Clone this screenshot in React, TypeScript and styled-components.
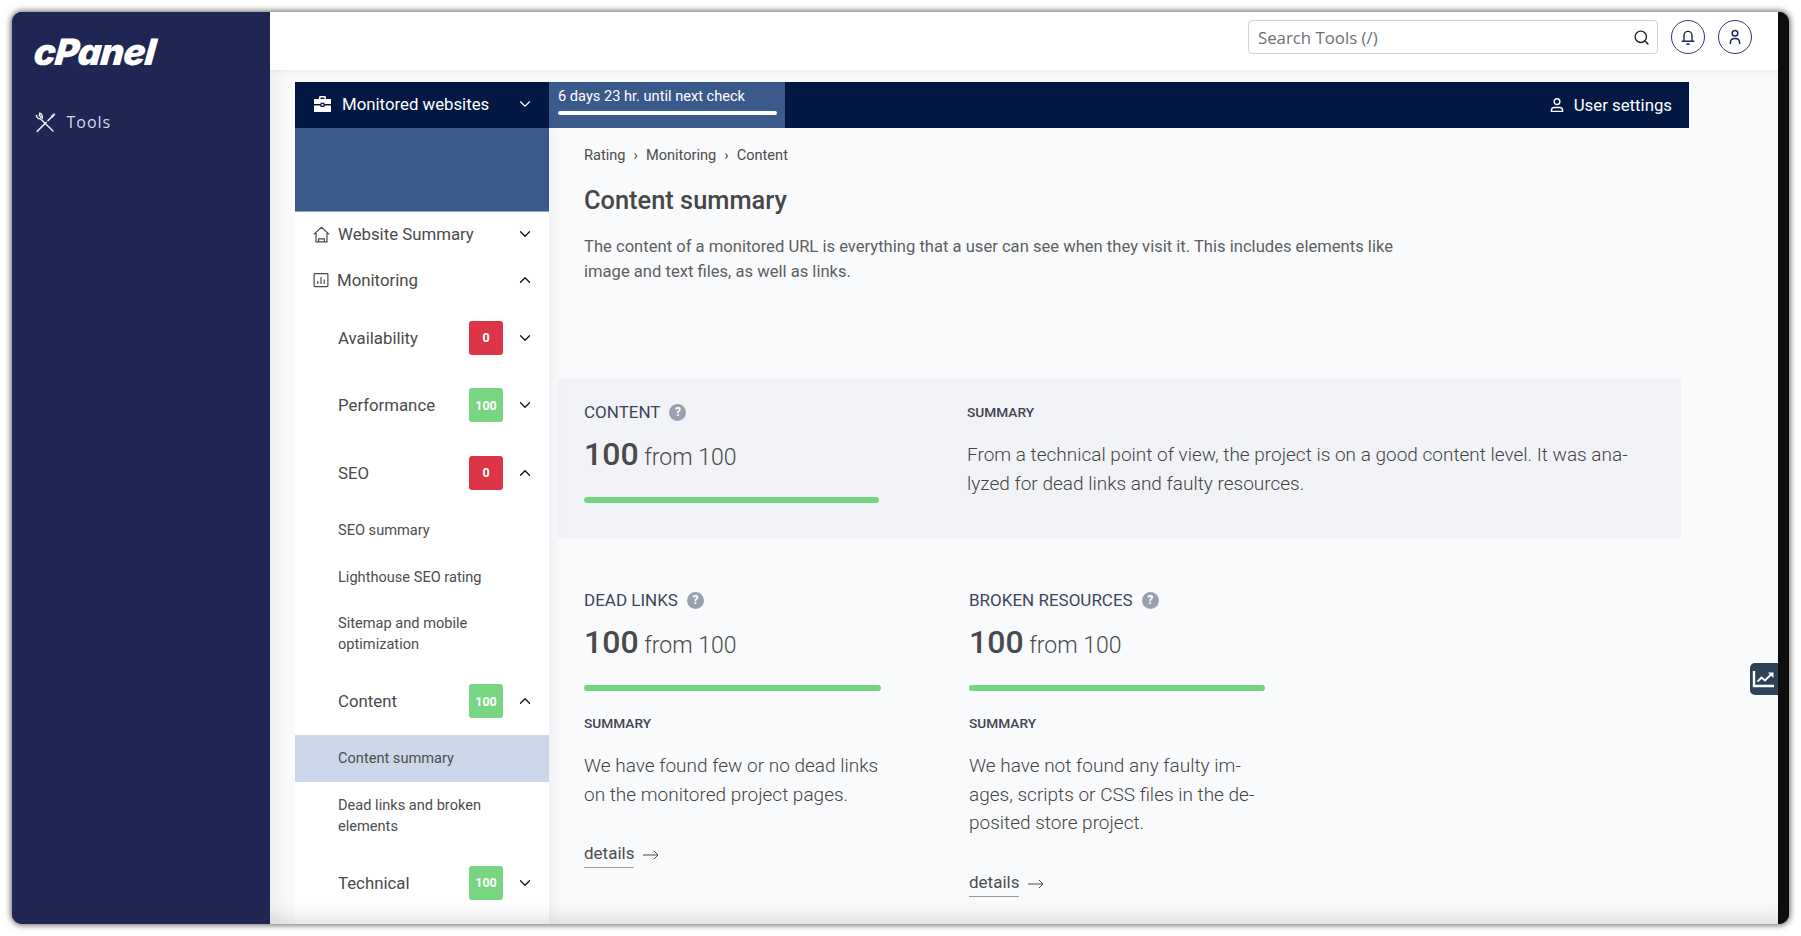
import React from "react";
import styled, { createGlobalStyle } from "styled-components";
import { ChevronDown, ChevronUp, Search } from "lucide-react";

const Global = createGlobalStyle`
  html, body { margin: 0; padding: 0; background: #fff; height: 100%; overflow: hidden; }
  * { box-sizing: border-box; }
  body { font-family: Roboto, "Liberation Sans", sans-serif; }
`;
const Page = styled.div`
  width: 1801px; height: 936px; padding: 12px 12px 12px 11.5px; background: #fff;
`;
const Frame = styled.div`
  display: flex; height: 912px; border-radius: 10px; overflow: hidden; background: #0e0e0e;
  box-shadow: 0 0 6px 1px rgba(0,0,0,.62);
`;
const Sidebar = styled.aside`
  width: 258.5px; flex: none; background: #1f2653; padding: 22px 22px 0;
`;
const Logo = styled.div`
  font-family: Inter, "Open Sans", sans-serif; font-weight: 900; font-style: italic; color: #fff;
  font-size: 36.5px; line-height: 36px; letter-spacing: -.7px; height: 36px; transform: skewX(-6deg);
  transform-origin: left;
`;
const ToolsLink = styled.div`
  display: flex; align-items: center; gap: 11px; margin-top: 40px; padding-left: 1px;
  font-family: "Open Sans", sans-serif; font-size: 16px; letter-spacing: 1px; color: #d5d8e4;
  height: 24px;
`;
const Main = styled.main`
  position: relative; flex: 1; min-width: 0; background: #f9fafc; display: flex; flex-direction: column;
  &::after {
    content: ""; position: absolute; inset: 0; pointer-events: none;
    box-shadow: inset 0 -22px 20px -16px rgba(0,0,0,.13), inset 24px 0 16px -16px rgba(0,0,0,.05);
  }
`;
const TopBar = styled.header`
  height: 58px; flex: none; background: #fff; display: flex; align-items: center; justify-content: flex-end;
  gap: 13px; padding: 0 26px 8px 0; box-shadow: 0 1px 6px rgba(0,0,0,.07); position: relative; z-index: 1;
`;
const SearchBox = styled.div`
  width: 410px; height: 34px; border: 1px solid #cfd0e0; border-radius: 4px; display: flex; align-items: center;
  justify-content: space-between; padding: 0 7px 0 9px; font-family: "Open Sans", sans-serif; font-size: 16.8px; color: #6d7076;
`;
const Round = styled.div`
  width: 34px; height: 34px; border-radius: 50%; border: 1px solid #31386a; display: flex; align-items: center;
  justify-content: center; color: #1f2653;
`;
const Body = styled.div`
  flex: 1; min-height: 0; padding: 12px 0 0 25px; width: 1419px;
`;
const NavBar = styled.nav`
  height: 46px; background: #021843; display: flex; align-items: stretch; color: #fff;
`;
const SiteSelect = styled.div`
  width: 254px; flex: none; display: flex; align-items: center; padding: 0 15px 2px 18px; gap: 10px;
  font-size: 16.8px; font-weight: 400;
  span { flex: 1; }
`;
const TimerTab = styled.div`
  width: 236px; background: #3a5a8c; padding: 5px 9px 0; font-size: 14.6px; font-weight: 400; line-height: 18px;
`;
const TimerBar = styled.div`
  height: 4px; background: #fff; border-radius: 2px; margin-top: 6px; width: 219px;
`;
const UserSettings = styled.div`
  margin-left: auto; display: flex; align-items: center; gap: 9px; padding: 0 17px 1px 0; font-size: 16.8px; font-weight: 400;
`;
const Columns = styled.div`
  display: flex; height: 796px; overflow: hidden;
`;
const Menu = styled.div`
  width: 254px; flex: none; background: #fff; box-shadow: 0 0 14px rgba(40,50,80,.09); position: relative;
`;
const MenuBanner = styled.div`
  height: 84px; background: #3a5a8c; border-bottom: 1px solid #8fa3c4;
`;
const TopGroup = styled.div`
  margin-top: -1px; padding-bottom: 1px;
`;
const TopRow = styled.div`
  height: 46px; display: flex; align-items: center; padding: 0 15px 0 18px; gap: 8px; font-size: 16.8px; color: #4a4a4a;
  span { flex: 1; }
`;
const Row = styled.div`
  height: 67.5px; display: flex; align-items: center; padding: 0 15px 0 43px; font-size: 16.8px; color: #4a4a4a;
  span { flex: 1; }
`;
const Badge = styled.div<{ $ok?: boolean }>`
  width: 34px; height: 34px; border-radius: 3px; margin-right: 13px; display: flex; align-items: center; justify-content: center;
  color: #fff; font-size: 12.5px; font-weight: 700; background: ${p => (p.$ok ? "#78d683" : "#dd3548")};
`;
const SubItem = styled.div<{ $active?: boolean }>`
  min-height: 47px; display: flex; align-items: center; padding: 12.5px 30px 12.5px 43px; font-size: 14.6px; line-height: 21px;
  color: #4d4d4d; background: ${p => (p.$active ? "#ccd7e9" : "transparent")};
`;
const Content = styled.section`
  flex: 1; min-width: 0; padding: 0 8px 0 9px;
`;
const Intro = styled.div`
  padding: 17px 0 0 26px; height: 250px;
`;
const Crumbs = styled.div`
  display: flex; gap: 8px; font-size: 14.6px; line-height: 20px; color: #4d4d4d;
`;
const Title = styled.h1`
  margin: 18px 0 0; font-size: 25.4px; line-height: 34px; font-weight: 500; color: #474747;
`;
const Lead = styled.p`
  margin: 17px 0 0; font-size: 16.6px; line-height: 25px; font-weight: 400; color: #5f5f5f;
`;
const Card = styled.div`
  height: 161px; background: #f2f3f6; border-radius: 3px; padding: 23px 26px 0; display: grid; grid-template-columns: 383px 1fr;
`;
const Label = styled.div`
  display: flex; align-items: center; gap: 9px; font-size: 17px; line-height: 22px; color: #3d4559; height: 22px;
`;
const Help = styled.span`
  width: 17px; height: 17px; border-radius: 50%; background: #9aa0b0; color: #fff; font-size: 12px; font-weight: 700;
  display: inline-flex; align-items: center; justify-content: center;
`;
const Score = styled.div`
  margin-top: 10px; color: #4a4a4a; font-size: 23px; font-weight: 300; line-height: 42px;
  b { font-size: 32px; font-weight: 500; margin-right: 0; }
`;
const Bar = styled.div<{ $w: number }>`
  height: 6px; border-radius: 3px; background: #74d680; width: ${p => p.$w}px; margin-top: 18px;
`;
const SummaryHead = styled.div`
  font-size: 13.7px; font-weight: 500; line-height: 22px; color: #3f4450; letter-spacing: 0;
`;
const SummaryText = styled.p`
  margin: 18px 0 0; font-size: 19px; line-height: 28.7px; font-weight: 300; color: #444;
`;
const Stats = styled.div`
  display: grid; grid-template-columns: 385px 297px; padding: 50px 0 0 26px;
`;
const Stat = styled.div`
  ${SummaryHead} { margin-top: 21px; }
  ${SummaryText} { margin-top: 18px; }
`;
const Details = styled.div`
  display: flex; align-items: center; gap: 9px; margin-top: 33px; font-size: 17px; color: #4d4d4d; line-height: 22px;
`;
const DetailsLink = styled.span`
  border-bottom: 1px solid #9a9a9a; padding-bottom: 3px;
`;
const SideTab = styled.div`
  position: absolute; right: 0; top: 651px; width: 28px; height: 32px; background: #2c4257; border-radius: 5px 0 0 5px;
  display: flex; align-items: center; justify-content: center; z-index: 2;
`;
const Edge = styled.div`
  width: 11px; flex: none; background: #0e0e0e;
`;

const ToolsIcon = () => (
  <svg width="21" height="21" viewBox="0 0 21 21" fill="none" stroke="#e8eaf2" strokeWidth="1.5" strokeLinecap="round">
    <path d="M1.4 3.4c.2 2.2 2 3.7 4 3.3L18 19" />
    <path d="M4.8 1.2l-.4 2.6 2.8 2.2c.6-1.7-.6-4.3-2.4-4.8z" />
    <path d="M2.2 19.4l9-9M13 8.6l2.4-2.4" />
    <path d="M15 6.8l1.6-3.2 2.6-2 .8.8-2 2.7-3 1.7z" fill="#e8eaf2" strokeWidth="0.6" />
  </svg>
);
const BriefcaseIcon = () => (
  <svg width="19" height="19" viewBox="0 0 19 19" fill="#fff">
    <path d="M6 4V2.4C6 1.6 6.6 1 7.4 1h4.2c.8 0 1.4.6 1.4 1.4V4h-1.5V2.5h-4V4z" />
    <path d="M1.5 4h16c.4 0 .5.2.5.5V9h-6.5V7.8h-4V9H1V4.5c0-.3.2-.5.5-.5z" />
    <path d="M1 10.4h6.5v1.7h4v-1.7H18v6c0 .4-.2.6-.6.6H1.6c-.4 0-.6-.2-.6-.6z" />
    <rect x="8.6" y="8.9" width="1.8" height="1.8" />
  </svg>
);
const BellIcon = () => (
  <svg width="16" height="17" viewBox="0 0 16 17" fill="none" stroke="#1f2653" strokeWidth="1.4" strokeLinecap="round">
    <path d="M4 12V6.4a4 4 0 0 1 8 0V12" />
    <path d="M2.2 12.2h11.6" />
    <path d="M7 15h2" strokeWidth="1.6" />
  </svg>
);
const UserIcon = ({ size = 16, color = "#fff" }: { size?: number; color?: string }) => (
  <svg width={size} height={size} viewBox="0 0 16 16" fill="none" stroke={color} strokeWidth="1.4">
    <circle cx="8" cy="4.6" r="2.9" />
    <path d="M2.4 14.4v-1.1c0-1.6 1.3-2.8 2.9-2.8h5.4c1.6 0 2.9 1.2 2.9 2.8v1.1z" />
  </svg>
);
const PersonIcon = () => (
  <svg width="14" height="16" viewBox="0 0 14 16" fill="none" stroke="#1f2653" strokeWidth="1.5" strokeLinecap="round">
    <circle cx="7" cy="4.2" r="2.8" />
    <path d="M2.4 14.4v-1c0-2.4 2-4 4.6-4s4.6 1.6 4.6 4v1" />
  </svg>
);
const HomeIcon = () => (
  <svg width="17" height="17" viewBox="0 0 17 17" fill="none" stroke="#4a4a4a" strokeWidth="1.2">
    <path d="M.8 8.4L8.5 1.4l7.7 7M3 7v8.8h11V7M5.6 15.8v-3h5.8v3" />
  </svg>
);
const ChartSquare = () => (
  <svg width="16" height="16" viewBox="0 0 16 16" fill="none" stroke="#4a4a4a" strokeWidth="1.2">
    <rect x="1.1" y="1.6" width="13.8" height="13" rx=".8" />
    <path d="M4.8 12V9M8 12V5M11.2 12V7.4" />
  </svg>
);
const TrendIcon = () => (
  <svg width="24" height="20" viewBox="0 0 24 20" fill="none" stroke="#fff" strokeWidth="2">
    <path d="M2 2v15h20" strokeWidth="2.4" />
    <path d="M5.5 12.5l4-4 3.5 3 6-6" />
    <path d="M16 3.5h5.5v5.5z" fill="#fff" stroke="none" />
  </svg>
);
const ArrowIcon = () => (
  <svg width="16" height="10" viewBox="0 0 16 10" fill="none" stroke="#4d4d4d" strokeWidth="1">
    <path d="M0 5h15M11 1l4 4-4 4" />
  </svg>
);

const Heading = ({ children }: { children: React.ReactNode }) => (
  <Label>
    {children}
    <Help>?</Help>
  </Label>
);
const ScoreLine = () => (
  <Score>
    <b>100</b> from 100
  </Score>
);

export default function App() {
  return (
    <Page>
      <Global />
      <Frame>
        <Sidebar>
          <Logo>cPanel</Logo>
          <ToolsLink>
            <ToolsIcon />
            Tools
          </ToolsLink>
        </Sidebar>
        <Main>
          <TopBar>
            <SearchBox>
              Search Tools (/)
              <Search size={17} color="#222" strokeWidth={2} />
            </SearchBox>
            <Round>
              <BellIcon />
            </Round>
            <Round>
              <PersonIcon />
            </Round>
          </TopBar>
          <Body>
            <NavBar>
              <SiteSelect>
                <BriefcaseIcon />
                <span>Monitored websites</span>
                <ChevronDown size={18} strokeWidth={1.5} />
              </SiteSelect>
              <TimerTab>
                6 days 23 hr. until next check
                <TimerBar />
              </TimerTab>
              <UserSettings>
                <UserIcon />
                User settings
              </UserSettings>
            </NavBar>
            <Columns>
              <Menu>
                <MenuBanner />
                <TopGroup>
                  <TopRow>
                    <HomeIcon />
                    <span>Website Summary</span>
                    <ChevronDown size={18} color="#111" strokeWidth={1.7} />
                  </TopRow>
                  <TopRow>
                    <ChartSquare />
                    <span>Monitoring</span>
                    <ChevronUp size={18} color="#111" strokeWidth={1.7} />
                  </TopRow>
                </TopGroup>
                <Row>
                  <span>Availability</span>
                  <Badge>0</Badge>
                  <ChevronDown size={18} color="#111" strokeWidth={1.7} />
                </Row>
                <Row>
                  <span>Performance</span>
                  <Badge $ok>100</Badge>
                  <ChevronDown size={18} color="#111" strokeWidth={1.7} />
                </Row>
                <Row>
                  <span>SEO</span>
                  <Badge>0</Badge>
                  <ChevronUp size={18} color="#111" strokeWidth={1.7} />
                </Row>
                <SubItem>SEO summary</SubItem>
                <SubItem>Lighthouse SEO rating</SubItem>
                <SubItem>Sitemap and mobile optimization</SubItem>
                <Row>
                  <span>Content</span>
                  <Badge $ok>100</Badge>
                  <ChevronUp size={18} color="#111" strokeWidth={1.7} />
                </Row>
                <SubItem $active>Content summary</SubItem>
                <SubItem>Dead links and broken elements</SubItem>
                <Row>
                  <span>Technical</span>
                  <Badge $ok>100</Badge>
                  <ChevronDown size={18} color="#111" strokeWidth={1.7} />
                </Row>
              </Menu>
              <Content>
                <Intro>
                  <Crumbs>
                    <span>Rating</span>
                    <span>›</span>
                    <span>Monitoring</span>
                    <span>›</span>
                    <span>Content</span>
                  </Crumbs>
                  <Title>Content summary</Title>
                  <Lead>
                    The content of a monitored URL is everything that a user can see when they visit it. This includes elements like
                    <br />
                    image and text files, as well as links.
                  </Lead>
                </Intro>
                <Card>
                  <div>
                    <Heading>CONTENT</Heading>
                    <ScoreLine />
                    <Bar $w={295} />
                  </div>
                  <div>
                    <SummaryHead>SUMMARY</SummaryHead>
                    <SummaryText>
                      From a technical point of view, the project is on a good content level. It was ana-
                      <br />
                      lyzed for dead links and faulty resources.
                    </SummaryText>
                  </div>
                </Card>
                <Stats>
                  <Stat>
                    <Heading>DEAD LINKS</Heading>
                    <ScoreLine />
                    <Bar $w={297} />
                    <SummaryHead>SUMMARY</SummaryHead>
                    <SummaryText>
                      We have found few or no dead links
                      <br />
                      on the monitored project pages.
                    </SummaryText>
                    <Details>
                      <DetailsLink>details</DetailsLink>
                      <ArrowIcon />
                    </Details>
                  </Stat>
                  <Stat>
                    <Heading>BROKEN RESOURCES</Heading>
                    <ScoreLine />
                    <Bar $w={296} />
                    <SummaryHead>SUMMARY</SummaryHead>
                    <SummaryText>
                      We have not found any faulty im-
                      <br />
                      ages, scripts or CSS files in the de-
                      <br />
                      posited store project.
                    </SummaryText>
                    <Details>
                      <DetailsLink>details</DetailsLink>
                      <ArrowIcon />
                    </Details>
                  </Stat>
                </Stats>
              </Content>
            </Columns>
          </Body>
          <SideTab>
            <TrendIcon />
          </SideTab>
        </Main>
        <Edge />
      </Frame>
    </Page>
  );
}
